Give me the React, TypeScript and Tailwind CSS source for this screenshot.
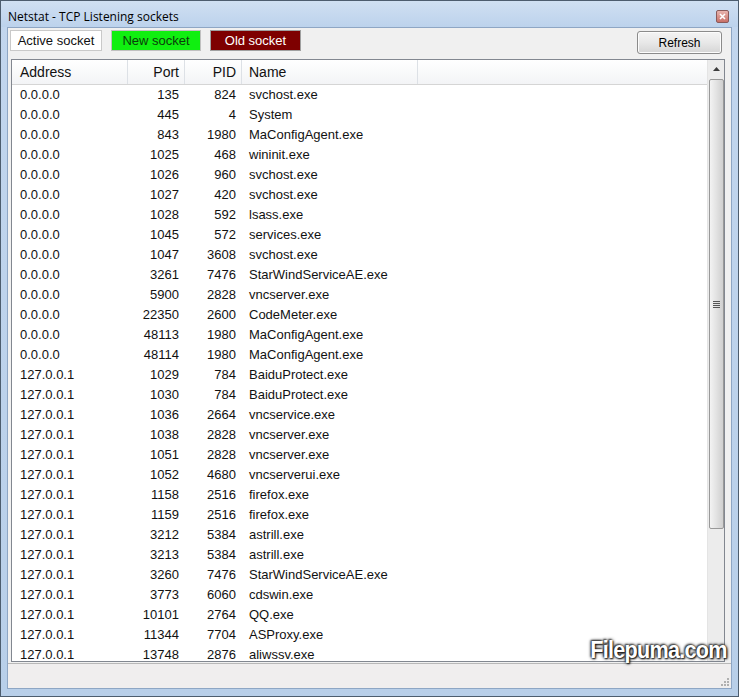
import React from "react";

type Row = [string, number, number, string];

const rows: Row[] = [
  ["0.0.0.0", 135, 824, "svchost.exe"],
  ["0.0.0.0", 445, 4, "System"],
  ["0.0.0.0", 843, 1980, "MaConfigAgent.exe"],
  ["0.0.0.0", 1025, 468, "wininit.exe"],
  ["0.0.0.0", 1026, 960, "svchost.exe"],
  ["0.0.0.0", 1027, 420, "svchost.exe"],
  ["0.0.0.0", 1028, 592, "lsass.exe"],
  ["0.0.0.0", 1045, 572, "services.exe"],
  ["0.0.0.0", 1047, 3608, "svchost.exe"],
  ["0.0.0.0", 3261, 7476, "StarWindServiceAE.exe"],
  ["0.0.0.0", 5900, 2828, "vncserver.exe"],
  ["0.0.0.0", 22350, 2600, "CodeMeter.exe"],
  ["0.0.0.0", 48113, 1980, "MaConfigAgent.exe"],
  ["0.0.0.0", 48114, 1980, "MaConfigAgent.exe"],
  ["127.0.0.1", 1029, 784, "BaiduProtect.exe"],
  ["127.0.0.1", 1030, 784, "BaiduProtect.exe"],
  ["127.0.0.1", 1036, 2664, "vncservice.exe"],
  ["127.0.0.1", 1038, 2828, "vncserver.exe"],
  ["127.0.0.1", 1051, 2828, "vncserver.exe"],
  ["127.0.0.1", 1052, 4680, "vncserverui.exe"],
  ["127.0.0.1", 1158, 2516, "firefox.exe"],
  ["127.0.0.1", 1159, 2516, "firefox.exe"],
  ["127.0.0.1", 3212, 5384, "astrill.exe"],
  ["127.0.0.1", 3213, 5384, "astrill.exe"],
  ["127.0.0.1", 3260, 7476, "StarWindServiceAE.exe"],
  ["127.0.0.1", 3773, 6060, "cdswin.exe"],
  ["127.0.0.1", 10101, 2764, "QQ.exe"],
  ["127.0.0.1", 11344, 7704, "ASProxy.exe"],
  ["127.0.0.1", 13748, 2876, "aliwssv.exe"],
];

const font = { fontFamily: '"Liberation Sans", Arial, sans-serif' };

export default function App() {
  return (
    <div
      className="relative w-[739px] h-[697px] flex flex-col bg-gradient-to-b from-[#c2d6ee] to-[#b8cfe9] border border-[#4d5d6e] text-[13px] text-[#111] overflow-hidden"
      style={font}
    >
      {/* title bar */}
      <div className="h-[26px] flex items-center pl-[7px] pr-[9px] bg-gradient-to-b from-[#d0e0f2] to-[#bcd2ec]">
        <span
          className="text-[12px] text-black mt-[5px]"
          style={{ fontFamily: '"Open Sans", "Noto Sans", sans-serif' }}
        >
          Netstat - TCP Listening sockets
        </span>
        <div className="ml-auto mt-[4px] w-[13px] h-[13px] border border-[#8a5a5a] bg-gradient-to-b from-[#e8b4ae] to-[#c87068] flex items-center justify-center rounded-[2px]">
          <svg width="7" height="7" viewBox="0 0 7 7">
            <path d="M1 1L6 6M6 1L1 6" stroke="#fff" strokeWidth="1.6" />
          </svg>
        </div>
      </div>

      {/* client area */}
      <div className="flex-1 mx-[6px] mb-[7px] bg-[#f0f0f0] border border-[#8ea6c4] flex flex-col min-h-0">
        {/* toolbar */}
        <div className="h-[31px] flex items-start pl-[2px] pr-[9px] pt-[2px] gap-[9px] shrink-0">
          <div className="w-[92px] h-[21px] bg-white border border-[#c9c9c9] flex items-center justify-center text-[13px]">
            Active socket
          </div>
          <div className="w-[90px] h-[21px] bg-[#10ef10] border border-[#c0c0c0] flex items-center justify-center text-[13px] text-[#0b3d0b]">
            New socket
          </div>
          <div className="w-[91px] h-[21px] bg-[#7e0000] border border-[#a0a0a0] flex items-center justify-center text-[13px] text-white">
            Old socket
          </div>
          <button className="ml-auto mt-[1px] w-[85px] h-[23px] rounded-[3px] border border-[#8b8b8b] bg-gradient-to-b from-[#f4f4f4] via-[#e8e8e8] to-[#d5d5d5] text-[12px] text-black shadow-[inset_0_0_0_1px_#fcfcfc]">
            Refresh
          </button>
        </div>

        {/* list view */}
        <div className="ml-[3px] mr-[6px] flex-1 min-h-0 border border-[#828790] bg-white flex overflow-hidden">
          <div className="flex-1 flex flex-col min-w-0">
            {/* header */}
            <div className="h-[25px] shrink-0 flex bg-gradient-to-b from-white to-[#f3f4f6] border-b border-[#d5d5d5] text-[14px]">
              <div className="w-[116px] flex items-center pl-[8px] border-r border-[#dde1e6]">Address</div>
              <div className="w-[57px] flex items-center justify-end pr-[5px] border-r border-[#dde1e6]">Port</div>
              <div className="w-[57px] flex items-center justify-end pr-[5px] border-r border-[#dde1e6]">PID</div>
              <div className="w-[176px] flex items-center pl-[7px] border-r border-[#dde1e6]">Name</div>
              <div className="flex-1" />
            </div>
            {/* rows */}
            {rows.map(([addr, port, pid, name], i) => (
              <div key={i} className="h-[20px] shrink-0 flex items-center text-[13px]">
                <div className="w-[116px] pl-[8px]">{addr}</div>
                <div className="w-[57px] text-right pr-[6px]">{port}</div>
                <div className="w-[57px] text-right pr-[6px]">{pid}</div>
                <div className="w-[176px] pl-[7px]">{name}</div>
              </div>
            ))}
          </div>
          {/* scrollbar */}
          <div className="w-[17px] shrink-0 bg-[#ececec] border-l border-[#e4e4e4] flex flex-col items-center">
            <div className="h-[17px] w-full flex items-center justify-center">
              <svg width="7" height="4" viewBox="0 0 7 4">
                <path d="M0 4L3.5 0L7 4Z" fill="#3c3c3c" />
              </svg>
            </div>
            <div className="mt-[2px] w-[15px] h-[450px] rounded-[2px] border border-[#999] bg-gradient-to-r from-[#f3f3f3] via-[#e2e2e2] to-[#cfcfcf] flex items-center justify-center">
              <div className="flex flex-col gap-[1px]">
                <div className="w-[7px] h-[1px] bg-[#555]" />
                <div className="w-[7px] h-[1px] bg-[#555]" />
                <div className="w-[7px] h-[1px] bg-[#555]" />
                <div className="w-[7px] h-[1px] bg-[#555]" />
              </div>
            </div>
          </div>
        </div>

        {/* status bar */}
        <div className="h-[25px] shrink-0 mt-[1px] border-t border-[#b8b8b8] bg-[#f0eeee] relative">
          <div className="absolute right-[2px] bottom-[2px] grid grid-cols-3 gap-[1px]">
            {[0, 0, 1, 0, 1, 1, 1, 1, 1].map((v, i) => (
              <div key={i} className={v ? "w-[2px] h-[2px] bg-[#b0b0b0]" : "w-[2px] h-[2px]"} />
            ))}
          </div>
        </div>
      </div>

      {/* watermark */}
      <div
        className="absolute right-[11px] bottom-[28px] text-[24px] font-bold text-white tracking-[-0.8px] scale-x-90 origin-right"
        style={{ textShadow: "1px 1px 2px #000, -1px -1px 2px #333, 0 0 4px #222" }}
      >
        Filepuma.com
      </div>
    </div>
  );
}
